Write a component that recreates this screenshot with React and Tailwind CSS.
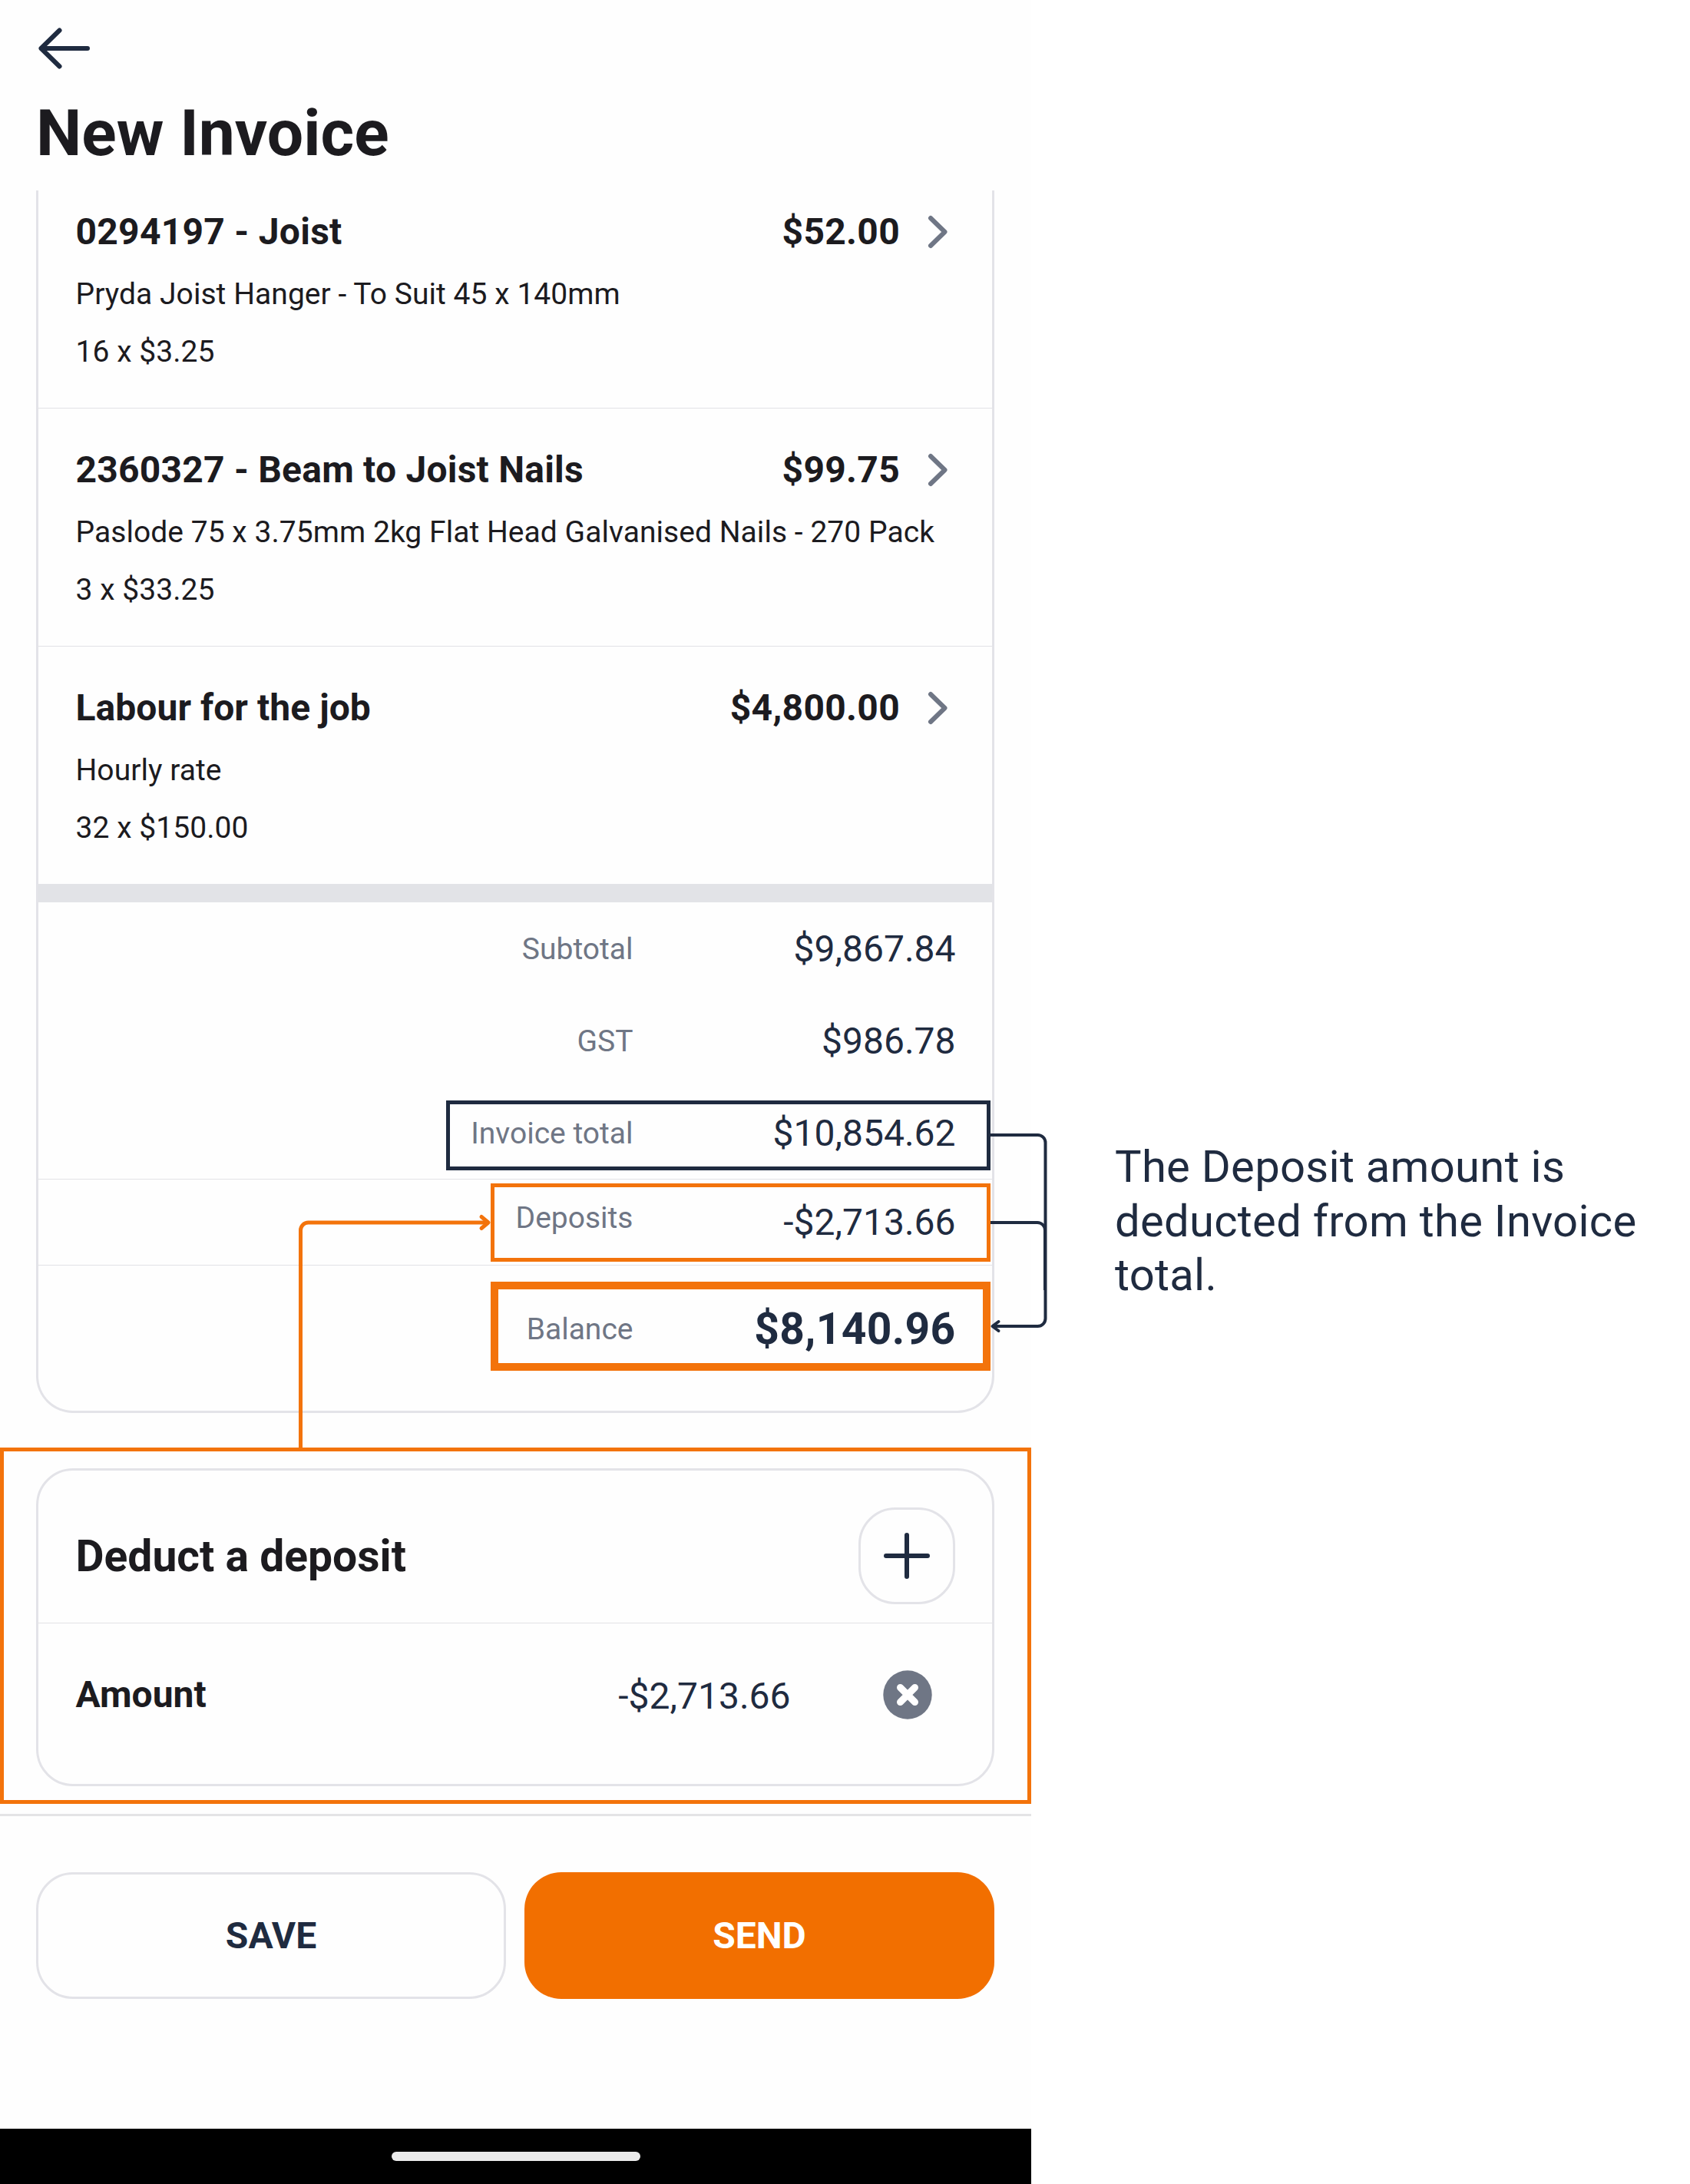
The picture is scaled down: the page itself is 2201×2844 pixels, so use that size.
const items = [
  {
    title: "0294197 - Joist",
    price: "$52.00",
    description: "Pryda Joist Hanger - To Suit 45 x 140mm",
    quantity: "16 x $3.25",
    frame: "pt-[26px] border-b border-[#e2e2e6]",
    tracking: "tracking-[0.27px]",
  },
  {
    title: "2360327 - Beam to Joist Nails",
    price: "$99.75",
    description: "Paslode 75 x 3.75mm 2kg Flat Head Galvanised Nails - 270 Pack",
    quantity: "3 x $33.25",
    frame: "pt-[52px] border-b border-[#e2e2e6]",
    tracking: "tracking-[0.22px]",
  },
  {
    title: "Labour for the job",
    price: "$4,800.00",
    description: "Hourly rate",
    quantity: "32 x $150.00",
    frame: "pt-[52px]",
    tracking: "tracking-[0.05px]",
  },
];

const totals = [
  { label: "Subtotal", value: "$9,867.84", row: "h-[120px] pt-[2px]", labelShift: "", big: false },
  { label: "GST", value: "$986.78", row: "h-[120px] pt-[2px]", labelShift: "", big: false },
  { label: "Invoice total", value: "$10,854.62", row: "h-[121px] border-b border-[#e2e2e6] pt-[2px]", labelShift: "", big: false },
  { label: "Deposits", value: "-$2,713.66", row: "h-[112px] border-b border-[#e2e2e6]", labelShift: "pb-3", big: false },
  { label: "Balance", value: "$8,140.96", row: "h-[165px]", labelShift: "", big: true },
];

function Item({ item }) {
  return (
    <div className={`flex flex-col pl-[48.5px] pb-[45px] text-[#1c1b1f] ${item.frame}`}>
      <div className="flex items-center pr-[57px] text-[48px] leading-[56px] font-bold">
        <span className={`flex-1 ${item.tracking}`}>{item.title}</span>
        <span className="tracking-[0.3px]">{item.price}</span>
        <svg className="ml-[36px] h-[44px] w-[27px]" viewBox="0 0 27 44" fill="none">
          <path d="M4 4 L22.5 22 L4 40" stroke="#6f7685" strokeWidth="6" strokeLinecap="round" strokeLinejoin="round" />
        </svg>
      </div>
      <p className="mt-[25px] text-[39px] leading-[56px] tracking-[0.05px] whitespace-nowrap">{item.description}</p>
      <p className="mt-[19px] text-[39px] leading-[56px] tracking-[0.05px]">{item.quantity}</p>
    </div>
  );
}

function TotalRow({ row }) {
  return (
    <div className={`flex items-center justify-end pr-[47.5px] ${row.row}`}>
      <span className={`text-[39px] leading-[56px] text-[#6f7685] ${row.labelShift}`}>{row.label}</span>
      <span
        className={
          row.big
            ? "w-[420px] text-right text-[57px] leading-[64px] font-bold tracking-[0.3px] text-[#1f2b40]"
            : "w-[420px] text-right text-[48px] leading-[56px] text-[#1f2b40]"
        }
      >
        {row.value}
      </span>
    </div>
  );
}

function Annotations() {
  return (
    <>
      <div className="absolute left-[581px] top-[1433px] h-[91px] w-[709px] border-[5px] border-[#1f2b40]" />
      <div className="absolute left-[639px] top-[1541px] h-[102px] w-[651px] border-[5px] border-[#f3730b]" />
      <div className="absolute left-[639px] top-[1669px] h-[116px] w-[651px] border-[10px] border-[#f3730b]" />
      <div className="absolute left-0 top-[1885px] h-[464px] w-[1343px] border-[5px] border-[#f3730b]" />
      <svg className="absolute left-0 top-0 h-[2844px] w-[1400px]" viewBox="0 0 1400 2844" fill="none" strokeLinecap="round" strokeLinejoin="round">
        <g stroke="#1f2b40" strokeWidth="4" strokeLinecap="butt">
          <path d="M1290 1478 H1351.5 A10 10 0 0 1 1361.5 1488 V1717 A10 10 0 0 1 1351.5 1727 H1294" />
          <path d="M1290 1592 H1351 A10 10 0 0 1 1361 1602 V1680" />
          <path d="M1300.5 1721 L1292.5 1727 L1300.5 1733" strokeLinecap="round" />
        </g>
        <g stroke="#f3730b" strokeWidth="5" strokeLinecap="butt">
          <path d="M391.5 1887 V1602 A10 10 0 0 1 401.5 1592 H635" />
          <path d="M627 1584.500 L636 1592 L627 1599.500" strokeLinecap="round" />
        </g>
      </svg>
    </>
  );
}

export default function App() {
  return (
    <div className="relative flex h-[2844px] w-[2201px] overflow-hidden bg-white font-['Roboto',sans-serif]">
      <main className="flex w-[1343px] flex-col bg-[#fefefe]">
        <header className="flex flex-col px-[47px] pt-[35px]">
          <svg className="h-[56px] w-[72px]" viewBox="0 0 72 56" fill="none">
            <path d="M67 28 H6.500 M30.500 4.500 L6.500 28 L30.500 51.500" stroke="#1f2b40" strokeWidth="6" strokeLinecap="round" strokeLinejoin="round" />
          </svg>
          <h1 className="mt-[33px] text-[84px] leading-[100px] font-bold text-[#1c1b1f]">New Invoice</h1>
        </header>

        <section className="mr-12 ml-[47px] mt-6 flex h-[1592px] flex-col rounded-b-[48px] border-[3px] border-t-0 border-[#e3e3e8]">
          {items.map((item) => (
            <Item key={item.title} item={item} />
          ))}
          <div className="h-6 shrink-0 bg-[#e2e3e7]" />
          {totals.map((row) => (
            <TotalRow key={row.label} row={row} />
          ))}
        </section>

        <section className="mr-12 ml-[47px] mt-[72px] flex h-[414px] flex-col rounded-[48px] border-[3px] border-[#e3e3e8]">
          <div className="flex h-[199px] items-center justify-between border-b border-[#e2e2e6] pt-6 pr-12 pl-[48.5px]">
            <h2 className="mt-[2px] text-[57px] leading-[64px] font-bold text-[#1c1b1f]">Deduct a deposit</h2>
            <button className="flex h-[126px] w-[126px] items-center justify-center rounded-[48px] border-[3px] border-[#e3e3e8]">
              <svg className="h-[60px] w-[60px]" viewBox="0 0 60 60" fill="none">
                <path d="M30 3 V57 M3 30 H57" stroke="#1f2b40" strokeWidth="6" strokeLinecap="round" />
              </svg>
            </button>
          </div>
          <div className="flex items-center pt-[61px] pr-[78.5px] pl-[48.5px] text-[48px] leading-[56px]">
            <span className="flex-1 font-bold text-[#1c1b1f]">Amount</span>
            <span className="mt-[3px] text-[#1f2b40]">-$2,713.66</span>
            <svg className="ml-[120px] h-[64px] w-[64px]" viewBox="0 0 64 64" fill="none">
              <circle cx="32" cy="32" r="31.700" fill="#6f7685" />
              <path d="M22.500 22.500 L41.500 41.500 M41.500 22.500 L22.500 41.500" stroke="#ffffff" strokeWidth="9" strokeLinecap="round" />
            </svg>
          </div>
        </section>

        <div className="mt-9 h-[3px] bg-[#e4e4e6]" />

        <div className="mr-12 ml-[47px] mt-[73px] grid h-[165px] grid-cols-2 gap-6 text-[48px] font-bold">
          <button className="rounded-[48px] border-[3px] border-[#e3e3e8] text-[#1f2b40]">SAVE</button>
          <button className="rounded-[48px] bg-[#f26f00] text-white">SEND</button>
        </div>

        <footer className="mt-auto flex h-[72px] items-center justify-center bg-black">
          <div className="h-3 w-[324px] rounded-md bg-[#ebebeb]" />
        </footer>
      </main>

      <aside className="mt-[1484px] ml-[109px] w-[740px] text-[58px] leading-[70.500px] tracking-[0.27px] text-[#1f2b40]">
        The Deposit amount is
        <br />
        deducted from the Invoice
        <br />
        total.
      </aside>

      <Annotations />
    </div>
  );
}
